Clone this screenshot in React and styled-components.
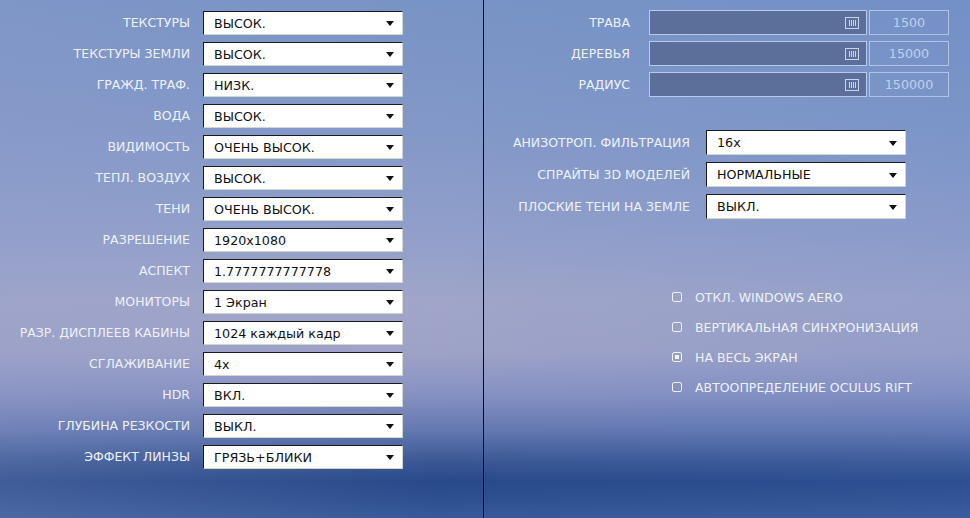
import React from "react";
import styled, { createGlobalStyle } from "styled-components";

const Global = createGlobalStyle`
  html, body { margin: 0; padding: 0; }
  body {
    width: 970px; height: 518px; overflow: hidden;
    font-family: "DejaVu Sans", Verdana, sans-serif;
  }
  #root { height: 518px; }
`;

const Page = styled.div`
  width: 970px;
  height: 518px;
  display: flex;
  background:
    linear-gradient(90deg, rgba(150,160,205,0.22) 0%, rgba(150,160,205,0) 45%, rgba(80,125,205,0.12) 100%),
    linear-gradient(180deg,
      #7893c5 0%,
      #8298c8 25%,
      #919fca 45%,
      #a0a5c9 58%,
      #9ea2c7 68%,
      #8792c3 76%,
      #6478b1 83%,
      #3a5894 89%,
      #28498a 93%,
      #2f5191 97%,
      #38599a 100%);
`;

const LeftCol = styled.div`
  width: 483px;
  border-right: 1px solid #0a0a14;
  box-sizing: content-box;
  display: grid;
  grid-template-columns: 190px 200px;
  column-gap: 13px;
  row-gap: 7px;
  align-content: start;
  padding-top: 11px;
`;

const RightCol = styled.div`
  flex: 1;
  display: flex;
  flex-direction: column;
`;

const Label = styled.div`
  color: #eef1f8;
  font-size: 12.5px;
  text-align: right;
  line-height: 24px;
  white-space: nowrap;
`;

const SelectBox = styled.div`
  box-sizing: border-box;
  background: #fff;
  border-top: 1px solid #1a1a1a;
  border-left: 1px solid #1a1a1a;
  border-right: 1px solid #cfd6cc;
  border-bottom: 1px solid #cfd6cc;
  display: flex;
  align-items: center;
  padding: 0 8px 0 10px;
  font-size: 12.7px;
  color: #111;
  white-space: nowrap;
  height: ${p => p.$h || 24}px;
`;

const SelectText = styled.span`
  flex: 1;
`;

const Arrow = styled.span`
  width: 0; height: 0;
  border-left: 4.5px solid transparent;
  border-right: 4.5px solid transparent;
  border-top: 5px solid #111;
  margin-top: 1px;
`;

const Select = ({ value, h }) => (
  <SelectBox $h={h}>
    <SelectText>{value}</SelectText>
    <Arrow />
  </SelectBox>
);

const SliderGrid = styled.div`
  display: grid;
  grid-template-columns: 165px 218px 82px;
  row-gap: 6px;
  padding-top: 10px;
`;

const SliderLabel = styled(Label)`
  line-height: 25px;
  padding-right: 19px;
`;

const Track = styled.div`
  height: 25px;
  box-sizing: border-box;
  border: 1px solid #b9c9e9;
  background: #5c6f9b;
  display: flex;
  align-items: center;
  justify-content: flex-end;
  padding-right: 7px;
`;

const Thumb = styled.div`
  width: 14px;
  height: 12px;
  box-sizing: border-box;
  border: 1px solid #c9d4ec;
  display: flex;
  justify-content: center;
  gap: 1px;
  padding: 2px 2px;
  & > span { width: 1px; background: #c9d4ec; }
`;

const ValueBox = styled.div`
  height: 25px;
  margin-left: 2px;
  box-sizing: border-box;
  border: 1px solid #b2c2e6;
  color: #c3d0ec;
  font-size: 12.7px;
  display: flex;
  align-items: center;
  justify-content: center;
`;

const Slider = ({ label, value }) => (
  <>
    <SliderLabel>{label}</SliderLabel>
    <Track>
      <Thumb><span /><span /><span /><span /></Thumb>
    </Track>
    <ValueBox>{value}</ValueBox>
  </>
);

const OptGrid = styled.div`
  display: grid;
  grid-template-columns: 206px 200px;
  column-gap: 16px;
  row-gap: 7px;
  margin-top: 33px;
`;

const OptLabel = styled(Label)`
  line-height: 25px;
`;

const Checks = styled.div`
  display: flex;
  flex-direction: column;
  gap: 12px;
  margin-top: 69px;
  padding-left: 188px;
`;

const CheckRow = styled.div`
  display: flex;
  align-items: center;
  gap: 13px;
  height: 18px;
  color: #eef1f8;
  font-size: 12.5px;
  white-space: nowrap;
`;

const Box = styled.span`
  width: 10px;
  height: 10px;
  box-sizing: border-box;
  border: 1px solid #f2f4fa;
  border-radius: 2px;
  display: flex;
  align-items: center;
  justify-content: center;
  &::after {
    content: "";
    width: 4px;
    height: 4px;
    background: ${p => (p.$on ? "#f2f4fa" : "transparent")};
  }
`;

const left = [
  ["ТЕКСТУРЫ", "ВЫСОК."],
  ["ТЕКСТУРЫ ЗЕМЛИ", "ВЫСОК."],
  ["ГРАЖД. ТРАФ.", "НИЗК."],
  ["ВОДА", "ВЫСОК."],
  ["ВИДИМОСТЬ", "ОЧЕНЬ ВЫСОК."],
  ["ТЕПЛ. ВОЗДУХ", "ВЫСОК."],
  ["ТЕНИ", "ОЧЕНЬ ВЫСОК."],
  ["РАЗРЕШЕНИЕ", "1920x1080"],
  ["АСПЕКТ", "1.7777777777778"],
  ["МОНИТОРЫ", "1 Экран"],
  ["РАЗР. ДИСПЛЕЕВ КАБИНЫ", "1024 каждый кадр"],
  ["СГЛАЖИВАНИЕ", "4x"],
  ["HDR", "ВКЛ."],
  ["ГЛУБИНА РЕЗКОСТИ", "ВЫКЛ."],
  ["ЭФФЕКТ ЛИНЗЫ", "ГРЯЗЬ+БЛИКИ"],
];

const opts = [
  ["АНИЗОТРОП. ФИЛЬТРАЦИЯ", "16x"],
  ["СПРАЙТЫ 3D МОДЕЛЕЙ", "НОРМАЛЬНЫЕ"],
  ["ПЛОСКИЕ ТЕНИ НА ЗЕМЛЕ", "ВЫКЛ."],
];

const checks = [
  ["ОТКЛ. WINDOWS AERO", false],
  ["ВЕРТИКАЛЬНАЯ СИНХРОНИЗАЦИЯ", false],
  ["НА ВЕСЬ ЭКРАН", true],
  ["АВТООПРЕДЕЛЕНИЕ OCULUS RIFT", false],
];

export default function App() {
  return (
    <>
      <Global />
      <Page>
        <LeftCol>
          {left.map(([l, v]) => (
            <React.Fragment key={l}>
              <Label>{l}</Label>
              <Select value={v} />
            </React.Fragment>
          ))}
        </LeftCol>
        <RightCol>
          <SliderGrid>
            <Slider label="ТРАВА" value="1500" />
            <Slider label="ДЕРЕВЬЯ" value="15000" />
            <Slider label="РАДИУС" value="150000" />
          </SliderGrid>
          <OptGrid>
            {opts.map(([l, v]) => (
              <React.Fragment key={l}>
                <OptLabel>{l}</OptLabel>
                <Select value={v} h={25} />
              </React.Fragment>
            ))}
          </OptGrid>
          <Checks>
            {checks.map(([l, on]) => (
              <CheckRow key={l}>
                <Box $on={on} />
                {l}
              </CheckRow>
            ))}
          </Checks>
        </RightCol>
      </Page>
    </>
  );
}
